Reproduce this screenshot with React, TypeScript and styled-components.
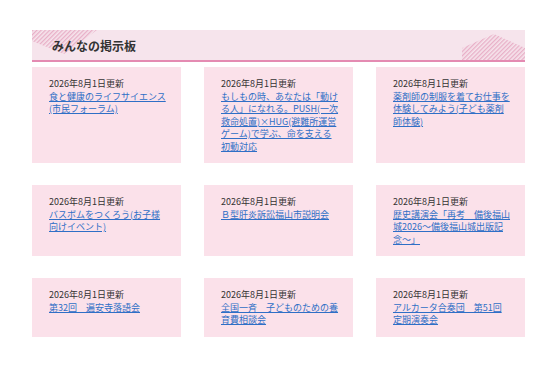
import styled, { createGlobalStyle } from "styled-components"

const GlobalStyle = createGlobalStyle`
  body {
    margin: 0;
    background: #fff;
    font-family: "Noto Sans CJK JP", "Noto Sans", sans-serif;
    color: #333;
  }
`

const posts = [
  "食と健康のライフサイエンス(市民フォーラム)",
  "もしもの時、あなたは「動ける人」になれる。PUSH(一次救命処置)×HUG(避難所運営ゲーム)で学ぶ、命を支える初動対応",
  "薬剤師の制服を着てお仕事を体験してみよう(子ども薬剤師体験)",
  "バスボムをつくろう(お子様向けイベント)",
  "Ｂ型肝炎訴訟福山市説明会",
  "歴史講演会「再考　備後福山城2026～備後福山城出版記念～」",
  "第32回　遍安寺落語会",
  "全国一斉　子どものための養育費相談会",
  "アルカータ合奏団　第51回定期演奏会",
]

export default function App() {
  return (
    <>
      <GlobalStyle />
      <Page>
        <Header>
          <CornerLeft viewBox="0 0 66 26" width={66} height={26}>
            <defs>
              <pattern id="stripeL" width="3" height="3" patternUnits="userSpaceOnUse" patternTransform="rotate(45)">
                <rect width="1.3" height="3" fill="#e8afc7" />
              </pattern>
            </defs>
            <polygon points="0,0 65,0 32,24 0,11" fill="url(#stripeL)" />
          </CornerLeft>
          <CornerRight viewBox="0 0 63 26" width={63} height={26}>
            <defs>
              <pattern id="stripeR" width="3" height="3" patternUnits="userSpaceOnUse" patternTransform="rotate(45)">
                <rect width="1.3" height="3" fill="#e8afc7" />
              </pattern>
            </defs>
            <polygon points="0,26 0,14 32,0 63,14 63,26" fill="url(#stripeR)" />
          </CornerRight>
          <Title>みんなの掲示板</Title>
        </Header>
        <Grid>
          {posts.map((title, i) => (
            <Card key={i}>
              <DateLine>2026年8月1日更新</DateLine>
              <PostLink href="#">{title}</PostLink>
            </Card>
          ))}
        </Grid>
      </Page>
    </>
  )
}

const Page = styled.main`
  padding: 30px 29px 0 32px;
`

const Header = styled.header`
  position: relative;
  height: 30px;
  background: #f6e4ec;
  border-bottom: 2px solid #e48bb2;
  display: flex;
  align-items: center;
  padding-left: 20px;
  overflow: hidden;
`

const CornerLeft = styled.svg`
  position: absolute;
  left: 0;
  top: 0;
`

const CornerRight = styled.svg`
  position: absolute;
  right: 0;
  bottom: 0;
`

const Title = styled.h2`
  position: relative;
  margin: 0;
  font-size: 12px;
  font-weight: bold;
  color: #333;
`

const Grid = styled.div`
  display: grid;
  grid-template-columns: repeat(3, 1fr);
  column-gap: 23px;
  row-gap: 22px;
  margin-top: 5px;
`

const Card = styled.div`
  background: #fbe1ea;
  padding: 11px 14.5px 10px 17px;
  font-size: 9px;
  line-height: 12.5px;
`

const DateLine = styled.div`
  color: #333;
`

const PostLink = styled.a`
  color: #2f6fc6;
  text-decoration: underline;
  word-break: break-all;
`
